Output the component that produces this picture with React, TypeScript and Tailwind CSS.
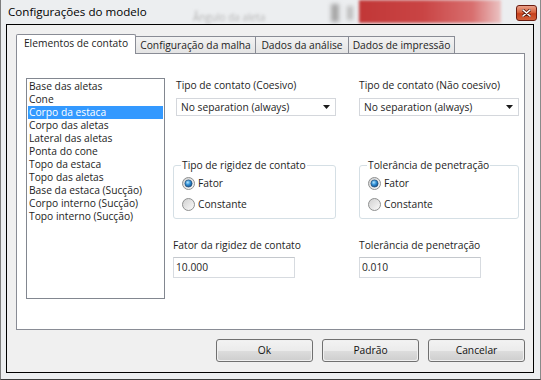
import React from "react";

const items = [
  "Base das aletas",
  "Cone",
  "Corpo da estaca",
  "Corpo das aletas",
  "Lateral das aletas",
  "Ponta do cone",
  "Topo da estaca",
  "Topo das aletas",
  "Base da estaca (Sucção)",
  "Corpo interno (Sucção)",
  "Topo interno (Sucção)",
];

function Radio({ checked }: { checked: boolean }) {
  return (
    <svg width="13" height="13" viewBox="0 0 13 13" className="shrink-0">
      <defs>
        <linearGradient id="rgOuter" x1="0" y1="0" x2="1" y2="1">
          <stop offset="0" stopColor="#cfcfcf" />
          <stop offset="1" stopColor="#fcfcfc" />
        </linearGradient>
        <radialGradient id="rgDot" cx="0.4" cy="0.35" r="0.75">
          <stop offset="0" stopColor="#b5e6ff" />
          <stop offset="0.45" stopColor="#2f8fd6" />
          <stop offset="1" stopColor="#0c3f78" />
        </radialGradient>
      </defs>
      <circle cx="6.5" cy="6.5" r="6" fill="url(#rgOuter)" stroke="#8f9191" strokeWidth="1" />
      {checked && <circle cx="6.5" cy="6.5" r="3.6" fill="url(#rgDot)" stroke="#244f78" strokeWidth="0.7" />}
    </svg>
  );
}

function Combo({ className = "" }: { className?: string }) {
  return (
    <div className={`h-[18px] w-[160px] bg-white border border-[#d4d7dc] flex items-center justify-between pl-[4px] pr-[4px] ${className}`}>
      <span className="leading-[13px]">No separation (always)</span>
      <svg width="8" height="5" viewBox="0 0 8 5">
        <path d="M0 0 H7 L3.5 4 Z" fill="#1a1a1a" />
      </svg>
    </div>
  );
}

function Column({
  comboLabel,
  groupLabel,
  fieldLabel,
  value,
  width,
  offset,
}: {
  comboLabel: string;
  groupLabel: string;
  fieldLabel: string;
  value: string;
  width: string;
  offset: boolean;
}) {
  return (
    <div className={`flex flex-col ${width}`}>
      <div className={`mt-[25px] h-[13px] leading-[13px] ${offset ? "pl-[3px]" : ""}`}>{comboLabel}</div>
      <Combo className={`mt-[6px] ${offset ? "ml-[3px]" : ""}`} />
      <div className="relative mt-[49px] h-[54px] border border-[#d5dfe5] rounded-[3px] flex flex-col pl-[8px] pt-[11px] gap-[8px]">
        <span className="absolute -top-[7px] left-[7px] bg-white px-[1px] leading-[13px]">{groupLabel}</span>
        <div className="flex items-center gap-[3px] h-[13px] leading-[13px]">
          <Radio checked={true} />
          <span>Fator</span>
        </div>
        <div className="flex items-center gap-[3px] h-[13px] leading-[13px]">
          <Radio checked={false} />
          <span>Constante</span>
        </div>
      </div>
      <div className="mt-[20px] h-[13px] leading-[13px]">{fieldLabel}</div>
      <div className="mt-[5px] h-[21px] w-[122px] bg-white border border-[#d7dbe0] border-t-[#c4c8cd] flex items-center pl-[2px]">
        {value}
      </div>
    </div>
  );
}

function Button({ label }: { label: string }) {
  return (
    <div className="w-[97px] h-[23px] rounded-[3px] border border-[#707070] p-px">
      <div className="w-full h-full rounded-[2px] bg-[linear-gradient(#f2f2f2_0%,#ebebeb_50%,#dddddd_51%,#cfcfcf_100%)] flex items-center justify-center leading-[13px] text-[#111]">
        {label}
      </div>
    </div>
  );
}

export default function App() {
  return (
    <div className="w-[541px] h-[380px] relative overflow-hidden bg-[#eceef0] border-l border-r border-b border-l-[#7d7d7d] border-r-[#8a8a8a] border-b-[#3c3c3c] font-['Open_Sans','Noto_Sans',sans-serif] text-[10.25px] text-[#1e1e1e] flex flex-col">
      {/* blurred background behind glass */}
      <div className="pointer-events-none absolute left-[358px] top-0 w-[142px] h-[23px] bg-[linear-gradient(90deg,#c13737_0%,#c94444_45%,#d86f6f_80%,#ebc3c3_100%)] blur-[1.5px]" />
      <div className="pointer-events-none absolute left-[192px] top-[10px] text-[10px] text-[#b4b4b4] blur-[1.4px]">Ângulo da aleta</div>
      <div className="pointer-events-none absolute left-[330px] top-[4px] w-[8px] h-[18px] bg-[#a8a8a8] blur-[2px]" />
      <div className="pointer-events-none absolute left-[346px] top-[6px] w-[6px] h-[14px] bg-[#bdbdbd] blur-[2px]" />

      {/* title bar */}
      <div className="relative h-[24px] flex items-start justify-between pl-[7px] pr-[3px]">
        <span className="mt-[4px] text-[11.6px] leading-[16px] text-black">Configurações do modelo</span>
        <div className="mt-[5px] w-[21px] h-[16px] rounded-[3px] border border-[#6b1c10] bg-[linear-gradient(#eaa08a_0%,#d8643f_45%,#c7401c_55%,#d2603a_100%)] flex items-center justify-center">
          <svg width="9" height="8" viewBox="0 0 9 8">
            <path d="M1 1 L8 7 M8 1 L1 7" stroke="#5a1a0e" strokeWidth="3" strokeLinecap="round" />
            <path d="M1 1 L8 7 M8 1 L1 7" stroke="#ffffff" strokeWidth="1.6" strokeLinecap="round" />
          </svg>
        </div>
      </div>

      {/* client area */}
      <div className="relative ml-[5px] w-[528px] h-[349px] border border-black bg-[#f0f0f0] flex flex-col pt-[9px]">
        {/* tabs */}
        <div className="flex items-end h-[20px] pl-[9px]">
          <div className="relative z-10 w-[120px] h-[20px] bg-white border border-b-0 border-[#898c95] rounded-t-[2px] flex items-start justify-center pt-[2px] leading-[13px]">
            Elementos de contato
          </div>
          <div className="-ml-px w-[121px] h-[18px] bg-[linear-gradient(#f3f3f3,#e3e3e3)] border border-b-0 border-[#898c95] flex items-start justify-center pt-[2px] leading-[13px]">
            Configuração da malha
          </div>
          <div className="-ml-px w-[94px] h-[18px] bg-[linear-gradient(#f3f3f3,#e3e3e3)] border border-b-0 border-[#898c95] flex items-start justify-center pt-[2px] leading-[13px]">
            Dados da análise
          </div>
          <div className="-ml-px w-[107px] h-[18px] bg-[linear-gradient(#f3f3f3,#e3e3e3)] border border-b-0 border-[#898c95] flex items-start justify-center pt-[2px] leading-[13px]">
            Dados de impressão
          </div>
        </div>

        {/* tab panel */}
        <div className="-mt-px ml-[9px] w-[509px] h-[277px] bg-white border border-[#898c95] flex pl-[9px] pt-[24px]">
          <div className="w-[139px] h-[221px] border border-[#828790] bg-white pt-px px-px flex flex-col">
            {items.map((it) => (
              <div
                key={it}
                className={`h-[13px] leading-[13px] pl-[1px] whitespace-nowrap ${
                  it === "Corpo da estaca" ? "bg-[#3399ff] text-white" : ""
                }`}
              >
                {it}
              </div>
            ))}
          </div>
          <div className="flex ml-[8px] -mt-[24px] gap-[23px]">
            <Column
              comboLabel="Tipo de contato (Coesivo)"
              groupLabel="Tipo de rigidez de contato"
              fieldLabel="Fator da rigidez de contato"
              value="10.000"
              width="w-[163px]"
              offset={true}
            />
            <Column
              comboLabel="Tipo de contato (Não coesivo)"
              groupLabel="Tolerância de penetração"
              fieldLabel="Tolerância de penetração"
              value="0.010"
              width="w-[160px]"
              offset={false}
            />
          </div>
        </div>

        {/* buttons */}
        <div className="mt-[9px] flex justify-end gap-[9px] pr-[8px]">
          <Button label="Ok" />
          <Button label="Padrão" />
          <Button label="Cancelar" />
        </div>
      </div>
    </div>
  );
}
